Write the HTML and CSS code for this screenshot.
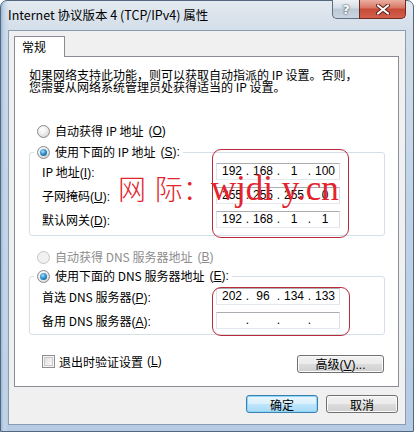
FILE: index.html
```html
<!DOCTYPE html>
<html lang="zh-CN">

<head>
    <meta charset="UTF-8">
    <title>Internet 协议版本 4 (TCP/IPv4) 属性</title>
    <link rel="stylesheet" href="styles.css">
</head>

<body>
    <div class="window">
        <div class="titlebar">
            <span class="title">Internet 协议版本 4 (TCP/IPv4) 属性</span>
            <div class="caption">
                <span class="cap-help">?</span>
                <span class="cap-close">
                    <svg width="14" height="11" viewBox="0 0 14 11">
                        <path d="M2 1.5 L12 9.5 M12 1.5 L2 9.5" stroke="#5b1d16" stroke-width="4" stroke-linecap="round" />
                        <path d="M2 1.5 L12 9.5 M12 1.5 L2 9.5" stroke="#fff" stroke-width="2.2" stroke-linecap="round" />
                    </svg>
                </span>
            </div>
        </div>

        <div class="client">
            <div class="tabs">
                <span class="tab">常规</span>
            </div>

            <div class="panel">
                <p class="intro">如果网络支持此功能，则可以获取自动指派的 IP 设置。否则，<br>您需要从网络系统管理员处获得适当的 IP 设置。</p>

                <div class="option first"><span class="radio"></span>自动获得 IP 地址<span class="key">(<u>O</u>)</span></div>

                <fieldset class="group ip-group">
                    <legend class="option"><span class="radio checked"></span>使用下面的 IP 地址<span class="key">(<u>S</u>):</span></legend>
                    <div class="field-row">
                        <span>IP 地址<span class="key">(<u>I</u>):</span></span>
                        <div class="ip"><span>192</span><i>.</i><span>168</span><i>.</i><span>1</span><i>.</i><span>100</span></div>
                    </div>
                    <div class="field-row">
                        <span>子网掩码<span class="key">(<u>U</u>):</span></span>
                        <div class="ip"><span>255</span><i>.</i><span>255</span><i>.</i><span>255</span><i>.</i><span>0</span></div>
                    </div>
                    <div class="field-row">
                        <span>默认网关<span class="key">(<u>D</u>):</span></span>
                        <div class="ip"><span>192</span><i>.</i><span>168</span><i>.</i><span>1</span><i>.</i><span>1</span></div>
                    </div>
                </fieldset>

                <div class="option disabled dns-auto"><span class="radio"></span>自动获得 DNS 服务器地址<span class="key">(<u>B</u>)</span></div>

                <fieldset class="group dns-group">
                    <legend class="option"><span class="radio checked"></span>使用下面的 DNS 服务器地址<span class="key">(<u>E</u>):</span></legend>
                    <div class="field-row">
                        <span>首选 DNS 服务器<span class="key">(<u>P</u>):</span></span>
                        <div class="ip"><span>202</span><i>.</i><span>96</span><i>.</i><span>134</span><i>.</i><span>133</span></div>
                    </div>
                    <div class="field-row">
                        <span>备用 DNS 服务器<span class="key">(<u>A</u>):</span></span>
                        <div class="ip"><span></span><i>.</i><span></span><i>.</i><span></span><i>.</i><span></span></div>
                    </div>
                </fieldset>

                <div class="bottom-row">
                    <div class="check-row"><span class="checkbox"></span>退出时验证设置<span class="key">(<u>L</u>)</span></div>
                    <button class="btn advanced">高级<span class="key">(<u>V</u>)...</span></button>
                </div>

                <div class="mark ip-mark"></div>
                <div class="mark dns-mark"></div>
                <div class="watermark"><span class="wm-cn">网</span> <span class="wm-cn">际：</span>wjdi y.cn</div>
            </div>

            <div class="dialog-buttons">
                <button class="btn default">确定</button>
                <button class="btn">取消</button>
            </div>
        </div>
    </div>
</body>

</html>
```

FILE: styles.css
```css
* {
    box-sizing: border-box;
}

body {
    margin: 0;
    background-color: #ffffff;
    font-family: "Noto Sans CJK SC", sans-serif;
    font-size: 12px;
    color: #000000;
}

u {
    text-decoration: underline;
}

.key {
    font-family: "Liberation Sans", sans-serif;
    font-size: 12px;
}

/* window frame */

.window {
    width: 414px;
    height: 432px;
    padding: 0 7px 6px 7px;
    border: 1px solid #53687f;
    border-radius: 7px 7px 0 0;
    background: linear-gradient(90deg, #9db8d6 0px, #c3d5e8 3px, transparent 8px),
        linear-gradient(180deg, #e3e9f0 0px, #d3dee9 30px, #c0d3e7 200px, #b5cbe3 100%);
    display: flex;
    flex-direction: column;
}

.titlebar {
    height: 29px;
    display: flex;
    justify-content: space-between;
    align-items: flex-start;
}

.title {
    margin-top: 7px;
    line-height: 14px;
    font-size: 12.5px;
}

.caption {
    display: flex;
    margin-top: -1px;
}

.cap-help,
.cap-close {
    height: 19px;
    display: flex;
    align-items: center;
    justify-content: center;
    border: 1px solid #5f6f80;
    border-top: none;
}

.cap-help {
    width: 27px;
    border-radius: 0 0 0 5px;
    border-right: none;
    background: linear-gradient(180deg, #eef2f6 0%, #d3dce5 45%, #bcc8d4 50%, #c9d5e0 100%);
    color: #ffffff;
    font-family: "DejaVu Sans", sans-serif;
    font-weight: bold;
    font-size: 13px;
    text-shadow: 0 0 2px #3a4a5c, 0 0 1px #3a4a5c;
}

.cap-close {
    width: 47px;
    border-radius: 0 0 5px 0;
    border-color: #6b2a22;
    background: linear-gradient(180deg, #eab0a2 0%, #d97562 45%, #c64a38 50%, #d35f4c 100%);
}

/* client area */

.client {
    flex: 1;
    background-color: #f0f0f0;
    border: 1px solid #8c9cb0;
    padding: 5px 6px 0 5px;
}

.tabs {
    display: flex;
}

.tab {
    position: relative;
    z-index: 1;
    width: 51px;
    height: 21px;
    margin-bottom: -1px;
    padding-left: 7px;
    line-height: 20px;
    background-color: #ffffff;
    border: 1px solid #898c95;
    border-bottom: none;
}

.panel {
    position: relative;
    background-color: #ffffff;
    border: 1px solid #898c95;
    padding: 12px 13px 13px 14px;
}

.intro {
    margin: 0;
    line-height: 12px;
}

.option {
    display: flex;
    align-items: center;
    gap: 5px;
    height: 14px;
    line-height: 14px;
}

.option.first {
    margin: 31px 0 0 8px;
}

.option.dns-auto {
    margin: 14px 0 0 8px;
}

.option.disabled {
    color: #8d8d8d;
}

.radio {
    width: 13px;
    height: 13px;
    border-radius: 50%;
    border: 1px solid #8a8a8a;
    background: radial-gradient(circle at 40% 35%, #ffffff 0%, #f0f0f0 40%, #c8c8c8 100%);
    display: flex;
    align-items: center;
    justify-content: center;
}

.radio.checked::after {
    content: "";
    width: 7px;
    height: 7px;
    border-radius: 50%;
    background: radial-gradient(circle at 40% 35%, #9fe0ff 0%, #2b8bc9 50%, #14507e 100%);
}

.disabled .radio {
    border-color: #c4c4c4;
    background: #f1f1f1;
}

.group {
    margin: 7px 0 0 0;
    min-width: 0;
    border: 1px solid #d5dfe5;
    border-radius: 3px;
    padding: 4px 44px 7px 12px;
}

.dns-group {
    margin-top: 5px;
    padding-top: 5px;
    padding-bottom: 5px;
}

.group legend {
    margin-left: -8px;
    padding: 0 3px;
}

.field-row {
    display: flex;
    justify-content: space-between;
    align-items: center;
    height: 17px;
}

.field-row + .field-row {
    margin-top: 7px;
}

.ip {
    width: 124px;
    height: 17px;
    padding-left: 2px;
    border: 1px solid;
    border-color: #abadb3 #dbdfe6 #e3e9ef #e2e3ea;
    display: grid;
    grid-template-columns: 26px 5px 26px 5px 26px 5px 26px;
    font-family: "Liberation Sans", sans-serif;
    font-size: 12px;
    line-height: 15px;
    text-align: center;
}

.ip i {
    font-style: normal;
}

.bottom-row {
    display: flex;
    justify-content: space-between;
    align-items: flex-start;
    margin-top: 20px;
    padding: 0 1px 0 13px;
}

.check-row {
    display: flex;
    align-items: center;
    gap: 4px;
    height: 13px;
    line-height: 13px;
}

.checkbox {
    width: 13px;
    height: 13px;
    border: 1px solid #8f8f8f;
    background: linear-gradient(135deg, #d6d6d6 0%, #f4f4f4 70%, #ffffff 100%);
    box-shadow: inset 0 0 0 1px #f4f4f4, inset 0 0 0 2px #c9c9c9;
}

.btn {
    height: 18px;
    padding: 0;
    border: 1px solid #707070;
    border-radius: 3px;
    background: linear-gradient(180deg, #f2f2f2 0%, #ebebeb 49%, #dddddd 50%, #cfcfcf 100%);
    box-shadow: inset 0 0 0 1px #fbfbfb;
    font-family: "Noto Sans CJK SC", sans-serif;
    font-size: 12px;
    line-height: 15px;
    color: #000000;
}

.btn.advanced {
    width: 87px;
}

.dialog-buttons {
    display: flex;
    justify-content: flex-end;
    gap: 8px;
    margin-top: 8px;
    padding-right: 1px;
}

.dialog-buttons .btn {
    width: 72px;
}

.btn.default {
    border-color: #3c7fb1;
    background: linear-gradient(180deg, #eaf6fd 0%, #d9f0fc 49%, #bee6fd 50%, #a7d9f5 100%);
    box-shadow: inset 0 0 0 1px #8ed6f8;
}

/* red marks drawn over the screenshot */

.mark {
    position: absolute;
    border: 1px solid #b82a3c;
    border-radius: 9px;
}

.ip-mark {
    left: 197px;
    top: 92px;
    width: 137px;
    height: 89px;
}

.dns-mark {
    left: 197px;
    top: 230px;
    width: 138px;
    height: 49px;
}

.watermark {
    position: absolute;
    left: 103px;
    top: 114px;
    white-space: nowrap;
    color: #e3232d;
    font-family: "Liberation Serif", serif;
    font-size: 35px;
    line-height: 34px;
}

.wm-cn {
    font-family: "Noto Sans CJK SC", sans-serif;
    font-weight: 300;
    font-size: 28px;
}
```
